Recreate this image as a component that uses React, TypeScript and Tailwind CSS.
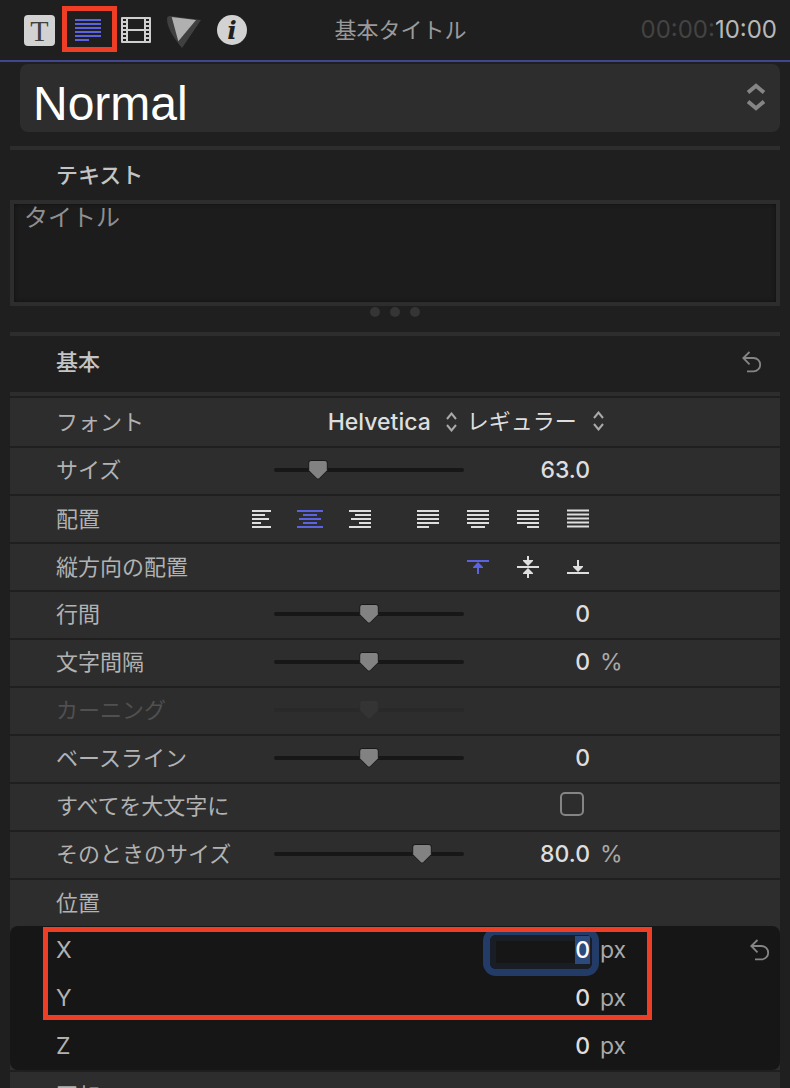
import React, { useEffect, useRef, useState } from 'react';

const ROW = 'grid grid-cols-[264fr_190fr_128fr_188fr] items-center h-12 border-b-2 border-[#1f1f1f] bg-[#2d2d2d]';
const LABEL = 'pl-[46px] whitespace-nowrap text-[#b2b2b2]';

type Bar = [x: number, width: number];

const ALIGNMENTS: { name: string; bars: Bar[]; shift?: number; gap?: boolean }[] = [
    { name: '左揃え', bars: [[4, 19], [4, 13], [4, 17], [4, 9], [4, 19]] },
    { name: '中央揃え', bars: [[-1, 26], [5, 14], [1, 22], [5, 14], [-1, 26]] },
    { name: '右揃え', bars: [[1, 22], [7, 16], [3, 20], [11, 12], [1, 22]] },
    { name: '両端揃え(左)', bars: [[1, 22], [1, 22], [1, 22], [1, 22], [1, 12]], gap: true },
    { name: '両端揃え(中央)', bars: [[1, 22], [1, 22], [1, 22], [1, 22], [5, 14]] },
    { name: '両端揃え(右)', bars: [[1, 22], [1, 22], [1, 22], [1, 22], [11, 12]] },
    { name: '両端揃え', bars: [[1, 22], [1, 22], [1, 22], [1, 22], [1, 22]], shift: -0.5 },
];

const VERTICAL_ALIGNMENTS = [
    { name: '上', path: 'M1 5h22v2H1zM12 7l5 5v1h-4v6h-2v-6H7v-1z' },
    { name: '中央', path: 'M1 11h22v2H1zM11 1h2v4h4v1l-5 5-5-5V5h4zM11 23h2v-4h4v-1l-5-5-5 5v1h4z' },
    { name: '下', path: 'M1 17h22v2H1zM11 5h2v6h4v1l-5 5-5-5v-1h4z' },
];

const Chevrons = ({ className }: { className: string }) => (
    <svg viewBox="0 0 11 20" className={className} fill="none" stroke="currentColor" strokeWidth="2" aria-hidden="true">
        <path d="M1 7L5.500 1.500L10 7M1 13L5.500 18.500L10 13" />
    </svg>
);

const ResetButton = ({ label }: { label: string }) => (
    <button aria-label={label} className="text-[#858585]">
        <svg viewBox="0 0 20 22" className="block h-[22px] w-5" fill="none" stroke="currentColor" strokeWidth="1.8">
            <path d="M7.500 1L1.300 7L7.500 13.300M1.500 7H11.500a6.700 6.700 0 0 1 0 13.400H5" />
        </svg>
    </button>
);

interface SliderProps {
    id: string;
    start: number;
    disabled?: boolean;
}

const Slider = ({ id, start, disabled = false }: SliderProps) => {
    const [position, setPosition] = useState(start);

    return (
        <div className="relative flex h-5 items-center">
            <div className={`h-1 w-full rounded-full ${disabled ? 'bg-[#292929]' : 'bg-[#171717]'}`} />
            {/* the thumb follows the invisible native range above it */}
            <svg viewBox="0 0 20 20" className="absolute top-0 h-5 w-5 -translate-x-1/2" style={{ left: `${position}%` }} aria-hidden="true">
                <path
                    d="M3 0.500H17Q19.300 0.500 19.300 3V10.500L11 18.800Q10 19.800 9 18.800L0.700 10.500V3Q0.700 0.500 3 0.500Z"
                    fill={disabled ? '#343434' : '#828282'}
                    stroke={disabled ? '#2d2d2d' : '#191919'}
                />
            </svg>
            <input
                id={id}
                type="range"
                disabled={disabled}
                value={position}
                onChange={(e) => setPosition(Number(e.target.value))}
                className="absolute inset-0 m-0 h-full w-full opacity-0"
            />
        </div>
    );
};

interface ValueFieldProps {
    label: string;
    start: string;
    selected?: boolean;
}

const ValueField = ({ label, start, selected = false }: ValueFieldProps) => {
    const ref = useRef<HTMLInputElement>(null);

    useEffect(() => {
        if (selected) ref.current?.select();
    }, [selected]);

    return (
        <input
            ref={ref}
            aria-label={label}
            defaultValue={start}
            className="mt-1 h-[34px] w-[102px] justify-self-end rounded-md bg-transparent pr-0.5 pb-1 text-right text-[23px] font-medium text-[#dedede] outline-none selection:bg-[#2c4a7c] selection:text-white focus:shadow-[inset_0_0_0_6px_#191d26] focus:ring-[7px] focus:ring-[#233b67]"
        />
    );
};

interface SliderRowProps {
    id: string;
    label: string;
    position: number;
    value?: string;
    unit?: string;
    disabled?: boolean;
}

const SliderRow = ({ id, label, position, value, unit, disabled }: SliderRowProps) => (
    <div className={`${ROW} pb-0.5`}>
        <label htmlFor={id} className={disabled ? 'pl-[46px] whitespace-nowrap text-[#505050]' : LABEL}>{label}</label>
        <Slider id={id} start={position} disabled={disabled} />
        {value && <ValueField label={`${label}の値`} start={value} />}
        {unit && <span className="pl-2 text-[23px] text-[#a9a9a9]">{unit}</span>}
    </div>
);

const Toolbar = () => (
    <nav className="flex items-center gap-5">
        <button aria-label="テキスト">
            <svg viewBox="0 0 31 31" className="block h-[31px] w-[31px]">
                <rect width="31" height="31" rx="4" fill="#d2d2d2" />
                <text x="15.500" y="26" textAnchor="middle" className="font-['Liberation_Serif',serif] text-[30px]" fill="#404040">T</text>
            </svg>
        </button>
        <button aria-label="書式" className="relative">
            <svg viewBox="0 0 26 22" className="block h-[22px] w-[26px]" fill="#5b63e0">
                <path d="M0 0h26v2H0zM0 4h26v2H0zM0 8h26v2H0zM0 12h26v2H0zM0 16h26v2H0zM0 20h14v2H0z" />
            </svg>
            <span className="pointer-events-none absolute -top-[13px] -left-[13px] h-[46px] w-[55px] border-5 border-[#ee3e25]" />
        </button>
        <button aria-label="ビデオ">
            <svg viewBox="0 0 30 26" className="block h-[26px] w-[30px]">
                <rect width="30" height="26" rx="1" fill="#cfcfcf" />
                <path d="M7 2h16v10H7zM7 14h16v10H7z" fill="#1f1f1f" />
                {[2, 6, 10, 14, 18, 22].map((y) => (
                    <path key={y} d={`M2 ${y}h3v2h-3zM25 ${y}h3v2h-3z`} fill="#1f1f1f" />
                ))}
            </svg>
        </button>
        <button aria-label="ジェネレータ">
            <svg viewBox="0 0 26 34" className="block h-[34px] w-[26px] overflow-visible">
                <path d="M-4 6Q-4 3 -1 3L30 7L11 35Q-4 17 -4 6Z" fill="#404040" />
                <path d="M0.700 4L25 7L7.300 28.300Z" fill="#b0b0b0" />
            </svg>
        </button>
        <button aria-label="情報">
            <svg viewBox="0 0 30 30" className="block h-[30px] w-[30px] overflow-visible">
                <circle cx="15" cy="15" r="15" fill="#d2d2d2" />
                <text x="15" y="24" textAnchor="middle" className="font-['DejaVu_Serif',serif] text-[25px] font-bold italic" fill="#1f1f1f">i</text>
            </svg>
        </button>
    </nav>
);

const AlignmentRow = () => {
    const [active, setActive] = useState(1);

    return (
        <div className={ROW}>
            <div className="col-span-3 flex items-center pr-0.5">
                <span className={`flex-1 ${LABEL}`}>配置</span>
                {ALIGNMENTS.map(({ name, bars, shift = 0, gap }, i) => (
                    <button
                        key={name}
                        aria-label={name}
                        aria-pressed={i === active}
                        onClick={() => setActive(i)}
                        className={`${gap ? 'ml-11' : 'ml-[26px]'} ${i === active ? 'text-[#5b63e0]' : 'text-[#dedede]'}`}
                    >
                        <svg viewBox="0 0 24 18" className="block h-[18px] w-6 overflow-visible" fill="currentColor">
                            {bars.map(([x, width], line) => (
                                <rect key={line} x={x} y={line * 4 + shift} width={width} height="2" />
                            ))}
                        </svg>
                    </button>
                ))}
            </div>
        </div>
    );
};

const VerticalAlignmentRow = () => {
    const [active, setActive] = useState(0);

    return (
        <div className={ROW}>
            <div className="col-span-3 flex items-center pr-0.5">
                <span className={`flex-1 ${LABEL}`}>縦方向の配置</span>
                {VERTICAL_ALIGNMENTS.map(({ name, path }, i) => (
                    <button
                        key={name}
                        aria-label={name}
                        aria-pressed={i === active}
                        onClick={() => setActive(i)}
                        className={`ml-[26px] ${i === active ? 'text-[#5b63e0]' : 'text-[#dedede]'}`}
                    >
                        <svg viewBox="0 0 24 24" className="block h-6 w-6" fill="currentColor">
                            <path d={path} />
                        </svg>
                    </button>
                ))}
            </div>
        </div>
    );
};

const PositionRow = ({ axis, selected }: { axis: string; selected?: boolean }) => (
    <div className="grid h-12 grid-cols-[264fr_190fr_128fr_188fr] items-center">
        <span className="pl-[46px] text-[23px] text-[#b2b2b2]">{axis}</span>
        <span />
        <ValueField label={axis} start="0" selected={selected} />
        <div className="flex items-center justify-between pr-[10px] pl-2 text-[23px] text-[#a9a9a9]">
            px
            {selected && <ResetButton label="位置をリセット" />}
        </div>
    </div>
);

const App = () => (
    <div className="h-screen overflow-hidden bg-[#1f1f1f] font-['Inter','Noto_Sans_CJK_JP',sans-serif] text-[22px] leading-8">
        <header className="grid h-[62px] grid-cols-[1fr_auto_1fr] items-center border-b-2 border-[#42458f] pr-[13px] pl-6">
            <Toolbar />
            <h1 className="text-[#9a9a9a]">基本タイトル</h1>
            <div className="text-right text-2xl text-[#b8b8b8]">
                <span className="text-[#434343]">00:00:</span>10:00
            </div>
        </header>

        <main className="px-[10px] pt-0.5">
            <div className="relative ml-[10px]">
                <select aria-label="スタイル" className="block h-[68px] w-full appearance-none rounded-lg bg-[#2d2d2d] pt-3 pl-[13px] font-['Liberation_Sans',sans-serif] text-5xl text-white">
                    <option>Normal</option>
                </select>
                <svg viewBox="0 0 18 28" className="pointer-events-none absolute top-[19px] right-[15px] h-7 w-[18px] text-[#858585]" fill="none" stroke="currentColor" strokeWidth="4" aria-hidden="true">
                    <path d="M1 9.500L9 2.800L17 9.500M1 18.500L9 25.200L17 18.500" />
                </svg>
            </div>

            <section className="mt-[14px] border-t-4 border-[#2d2d2d]">
                <h2 className="flex h-[50px] items-center pl-[46px] font-medium text-[#c4c4c4]">
                    <label htmlFor="title-text">テキスト</label>
                </h2>
                <textarea
                    id="title-text"
                    defaultValue="タイトル"
                    className="block h-[106px] w-full resize-none border-4 border-[#2d2d2d] bg-[#1c1c1c] px-[10px] text-2xl leading-7 text-[#8f8f8f] shadow-[inset_0_0_4px_#101010] outline-none"
                />
                <div className="flex h-[26px] items-start justify-center gap-[10px] pt-px">
                    <span className="size-[10px] rounded-full bg-[#353535]" />
                    <span className="size-[10px] rounded-full bg-[#353535]" />
                    <span className="size-[10px] rounded-full bg-[#353535]" />
                </div>
            </section>

            <section>
                <div className="flex h-16 items-center justify-between border-y-4 border-[#2d2d2d] pr-[18px] pb-1 pl-[46px]">
                    <h2 className="font-medium text-[#c4c4c4]">基本</h2>
                    <ResetButton label="基本をリセット" />
                </div>

                <div className="mt-0.5 flex h-[50px] items-center border-b-2 border-[#1f1f1f] bg-[#2d2d2d]">
                    <label htmlFor="font-family" className={`w-[41%] ${LABEL}`}>フォント</label>
                    <div className="ml-0.5 flex items-center text-[#dedede]">
                        <select id="font-family" className="w-[118px] appearance-none text-[23px] font-medium">
                            <option>Helvetica</option>
                        </select>
                        <Chevrons className="h-5 w-[11px] text-[#a9a9a9]" />
                        <select aria-label="書体" className="ml-[10px] w-[126px] appearance-none pb-0.5">
                            <option>レギュラー</option>
                        </select>
                        <Chevrons className="mb-0.5 h-5 w-[11px] text-[#a9a9a9]" />
                    </div>
                </div>
                <SliderRow id="size" label="サイズ" position={23} value="63.0" />
                <AlignmentRow />
                <VerticalAlignmentRow />
                <SliderRow id="line-spacing" label="行間" position={50} value="0" />
                <SliderRow id="tracking" label="文字間隔" position={50} value="0" unit="%" />
                <SliderRow id="kerning" label="カーニング" position={50} disabled />
                <SliderRow id="baseline" label="ベースライン" position={50} value="0" />
                <div className={`${ROW} pb-0.5`}>
                    <label htmlFor="all-caps" className={LABEL}>すべてを大文字に</label>
                    <input
                        id="all-caps"
                        type="checkbox"
                        className="col-start-3 mr-2 mb-1 size-6 appearance-none justify-self-end rounded-[5px] border-2 border-[#858585] checked:bg-[#5b63e0]"
                    />
                </div>
                <SliderRow id="caps-size" label="そのときのサイズ" position={78} value="80.0" unit="%" />
                <div className="flex h-[46px] items-center bg-[#2d2d2d]">
                    <h3 className={LABEL}>位置</h3>
                </div>
                <div className="bg-[#2d2d2d]">
                    <div className="relative rounded-lg bg-[#161616]">
                        <PositionRow axis="X" selected />
                        <PositionRow axis="Y" />
                        <PositionRow axis="Z" />
                        <span className="pointer-events-none absolute top-px right-[128px] left-[33px] h-[93px] border-5 border-[#ee3e25]" />
                    </div>
                </div>
                <div className="mt-0.5 flex h-12 items-center bg-[#2d2d2d]">
                    <h3 className={LABEL}>回転</h3>
                </div>
            </section>
        </main>
    </div>
);

export default App;
